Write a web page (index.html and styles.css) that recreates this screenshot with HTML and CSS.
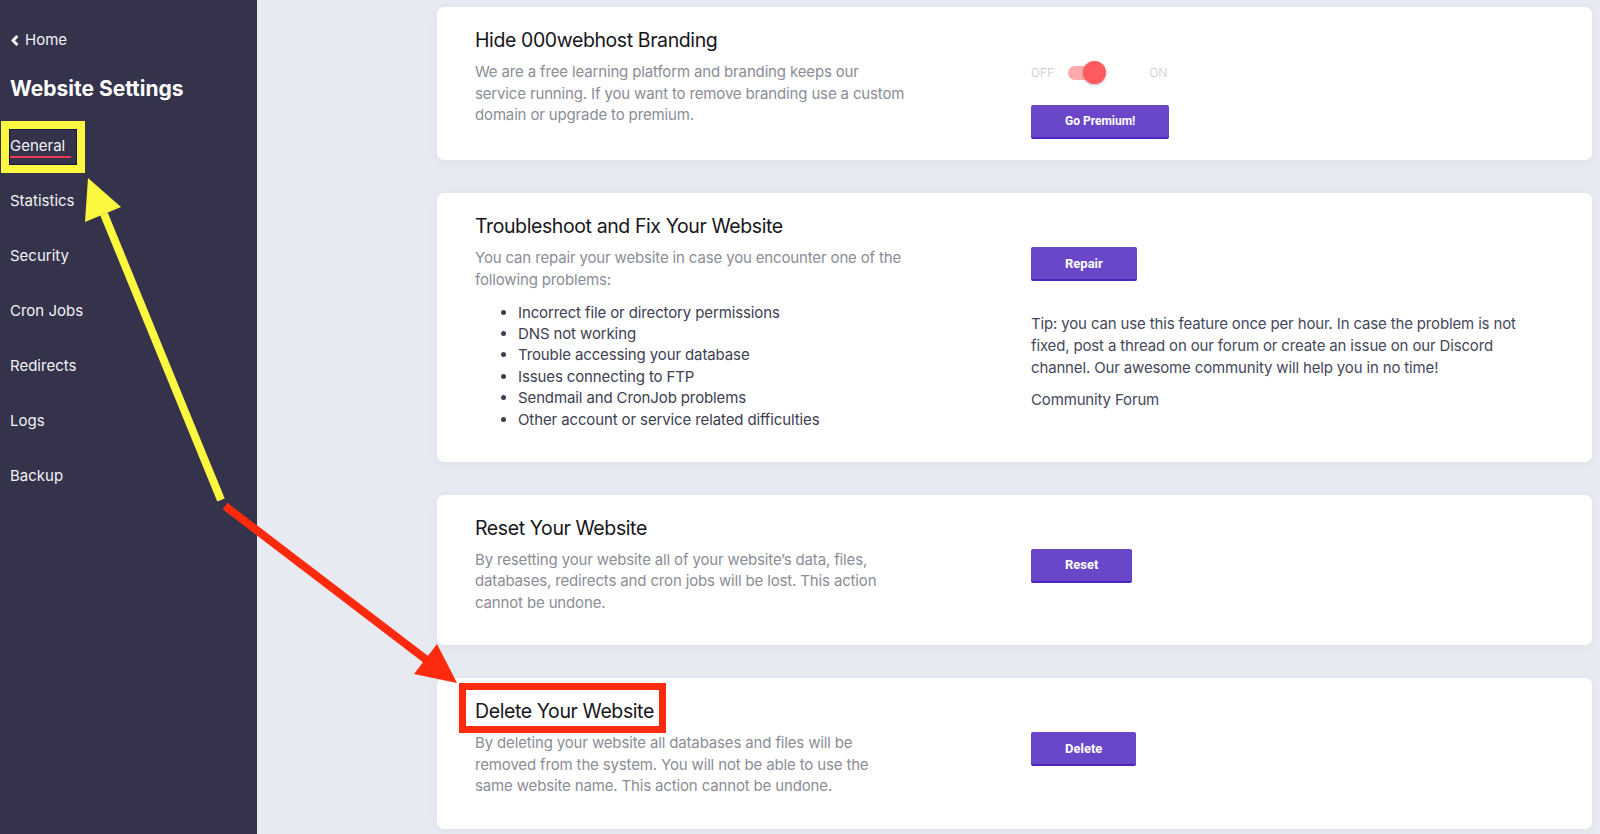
FILE: index.html
```html
<!DOCTYPE html>
<html lang="en">
<head>
    <meta charset="UTF-8">
    <meta name="viewport" content="width=device-width, initial-scale=1.0">
    <title>Website Settings</title>
    <link rel="stylesheet" href="styles.css">
</head>
<body>
    <aside class="sidebar">
        <a class="back_link" href="#">
            <svg class="chevron" width="8" height="11" viewBox="0 0 8 11"><path d="M6.4 1 L2 5.5 L6.4 10" fill="none" stroke="#f1f1f6" stroke-width="3"/></svg>
            Home
        </a>
        <h2 class="sidebar_title">Website Settings</h2>
        <ul class="side_nav">
            <li><a href="#" class="active"><span>General</span></a></li>
            <li><a href="#">Statistics</a></li>
            <li><a href="#">Security</a></li>
            <li><a href="#">Cron Jobs</a></li>
            <li><a href="#">Redirects</a></li>
            <li><a href="#">Logs</a></li>
            <li><a href="#">Backup</a></li>
        </ul>
    </aside>

    <main class="content">
        <section class="card">
            <div class="card_text">
                <h3>Hide 000webhost Branding</h3>
                <p class="desc">We are a free learning platform and branding keeps our service running. If you want to remove branding use a custom domain or upgrade to premium.</p>
            </div>
            <div class="card_action">
                <div class="toggle_row">
                    <span class="toggle_label">OFF</span>
                    <span class="switch"></span>
                    <span class="toggle_label on">ON</span>
                </div>
                <button class="btn btn_small">Go Premium!</button>
            </div>
        </section>

        <section class="card">
            <div class="card_text">
                <h3>Troubleshoot and Fix Your Website</h3>
                <p class="desc">You can repair your website in case you encounter one of the following problems:</p>
                <ul class="problems">
                    <li>Incorrect file or directory permissions</li>
                    <li>DNS not working</li>
                    <li>Trouble accessing your database</li>
                    <li>Issues connecting to FTP</li>
                    <li>Sendmail and CronJob problems</li>
                    <li>Other account or service related difficulties</li>
                </ul>
            </div>
            <div class="card_action">
                <button class="btn">Repair</button>
                <p class="tip">Tip: you can use this feature once per hour. In case the problem is not fixed, post a thread on our forum or create an issue on our Discord channel. Our awesome community will help you in no time!</p>
                <a class="forum_link" href="#">Community Forum</a>
            </div>
        </section>

        <section class="card">
            <div class="card_text">
                <h3>Reset Your Website</h3>
                <p class="desc">By resetting your website all of your website’s data, files, databases, redirects and cron jobs will be lost. This action cannot be undone.</p>
            </div>
            <div class="card_action">
                <button class="btn">Reset</button>
            </div>
        </section>

        <section class="card">
            <div class="card_text">
                <h3>Delete Your Website</h3>
                <p class="desc">By deleting your website all databases and files will be removed from the system. You will not be able to use the same website name. This action cannot be undone.</p>
            </div>
            <div class="card_action">
                <button class="btn">Delete</button>
            </div>
        </section>
    </main>

    <!-- annotation layer drawn over the screenshot -->
    <svg class="annotations" width="1600" height="834" viewBox="0 0 1600 834">
        <rect x="5" y="125" width="76" height="44" fill="none" stroke="#fbf83f" stroke-width="8"/>
        <rect x="9.5" y="129.5" width="67" height="35" fill="none" stroke="#16154f" stroke-width="1"/>
        <line x1="221" y1="500" x2="104" y2="214" stroke="#fbf83f" stroke-width="8"/>
        <polygon points="88,178 121,207 85,222" fill="#fbf83f"/>

        <line x1="225" y1="506" x2="428" y2="661" stroke="#fd2a0d" stroke-width="8"/>
        <polygon points="457,683 437,644 414,674" fill="#fd2a0d"/>
        <rect x="462.5" y="686.5" width="200" height="43" fill="none" stroke="#fd2a0d" stroke-width="7"/>
    </svg>
</body>
</html>
```

FILE: styles.css
```css
* {
    box-sizing: border-box;
}
body {
    margin: 0;
    display: flex;
    height: 834px;
    position: relative;
    overflow: hidden;
    font-family: 'Inter', 'Noto Sans', sans-serif;
    background-color: #e7eaf0;
}

/* sidebar */
.sidebar {
    width: 257px;
    flex-shrink: 0;
    background-color: #35334b;
    color: #f1f1f6;
    padding: 30px 0 0 10px;
}
.back_link {
    display: flex;
    align-items: center;
    gap: 6px;
    padding-left: 1px;
    color: #f1f1f6;
    text-decoration: none;
    font-size: 15px;
    line-height: 20px;
}
.sidebar_title {
    margin: 25px 0 0;
    font-size: 21px;
    line-height: 28px;
    font-weight: 700;
    color: #ffffff;
}
.side_nav {
    list-style: none;
    margin: 15px 0 0;
    padding: 0;
}
.side_nav a {
    display: block;
    color: #f1f1f6;
    text-decoration: none;
    font-size: 15px;
    line-height: 21px;
    padding: 17px 0;
}
.side_nav a.active span {
    padding: 0 6px 3px 0;
    background: linear-gradient(#f0384f, #f0384f) no-repeat left bottom / 100% 2px;
}

/* main column */
.content {
    flex: 1;
    padding: 7px 8px 0 180px;
    display: flex;
    flex-direction: column;
    gap: 33px;
}
.card {
    background-color: #ffffff;
    border-radius: 7px;
    box-shadow: 0 2px 10px rgba(60, 70, 110, 0.06);
    padding: 18px 38px 21px;
    display: grid;
    grid-template-columns: 556px 1fr;
}
.card_text {
    padding-bottom: 11px;
}
.card h3 {
    margin: 0;
    padding-top: 1px;
    font-size: 19.5px;
    letter-spacing: -0.4px;
    line-height: 28px;
    font-weight: 400;
    color: #16161c;
}
.desc {
    margin: 7px 0 0;
    width: 432px;
    font-size: 15px;
    letter-spacing: -0.15px;
    line-height: 21.5px;
    color: #8b8d96;
}
.problems {
    margin: 11.5px 0 0;
    padding-left: 43px;
    font-size: 15px;
    letter-spacing: -0.12px;
    line-height: 21.4px;
    color: #3d4052;
}

.card_action {
    margin-top: 36px;
    max-width: 500px;
}
.toggle_row {
    display: flex;
    align-items: center;
    height: 23px;
    margin-bottom: 21px;
}
.toggle_label {
    font-family: 'Roboto', sans-serif;
    font-weight: 300;
    font-size: 13px;
    color: #c6c6cb;
}
.toggle_label.on {
    margin-left: 43px;
}
.switch {
    width: 38px;
    height: 23px;
    margin-left: 14px;
    position: relative;
}
.switch::before {
    content: '';
    position: absolute;
    left: 0;
    top: 4.5px;
    width: 36px;
    height: 14px;
    border-radius: 7px;
    background-color: #ffa9ac;
}
.switch::after {
    content: '';
    position: absolute;
    right: 0;
    top: 0;
    width: 23px;
    height: 23px;
    border-radius: 50%;
    background-color: #ff5a5f;
    box-shadow: 0 1px 3px rgba(0, 0, 0, 0.25);
}

.btn {
    display: block;
    height: 34px;
    padding: 0 34px;
    border: none;
    border-bottom: 2px solid #4f25c2;
    border-radius: 2px;
    background-color: #6a47c9;
    color: #ffffff;
    font-family: 'Roboto', sans-serif;
    font-weight: 700;
    font-size: 13px;
    cursor: pointer;
}
.btn_small {
    font-size: 12px;
}
.tip {
    margin: 32px 0 0;
    font-size: 15px;
    letter-spacing: -0.15px;
    line-height: 22px;
    color: #45485a;
}
.forum_link {
    display: block;
    margin-top: 10px;
    font-size: 15px;
    letter-spacing: -0.15px;
    line-height: 22px;
    color: #45485a;
    text-decoration: none;
}

.annotations {
    position: absolute;
    top: 0;
    left: 0;
    pointer-events: none;
}
```
